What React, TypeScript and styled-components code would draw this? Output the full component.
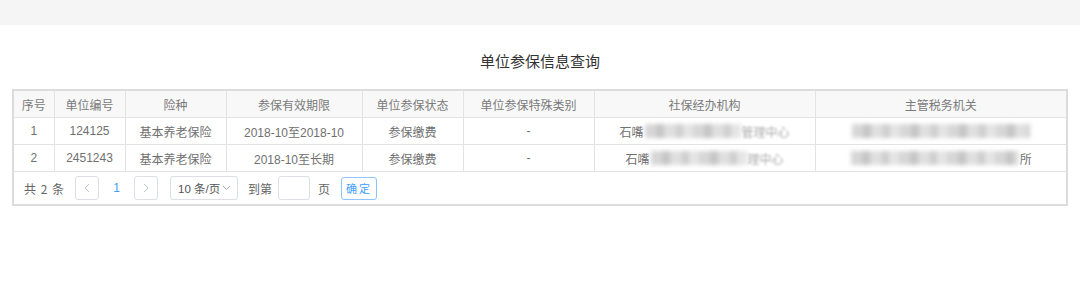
import React from 'react';
import styled, { createGlobalStyle } from 'styled-components';

interface Unit {
  no: number;
  code: string;
  kind: string;
  period: string;
  status: string;
  special: string;
  agencyHead: string;
  agencyTail: string;
  taxTail: string;
}

const GlobalStyle = createGlobalStyle`
  html, body {
    margin: 0;
    padding: 0;
    background: #fff;
  }
  body {
    font-family: "Liberation Sans", "Noto Sans CJK SC", sans-serif;
    color: #666;
  }
`;

const TopBar = styled.div`
  height: 25px;
  background: #f5f5f5;
`;

const Title = styled.h2`
  margin: 25px 0 0;
  height: 22px;
  line-height: 22px;
  text-align: center;
  font-size: 15px;
  font-weight: normal;
  color: #333;
  font-family: "Noto Sans CJK SC", sans-serif;
`;

const Panel = styled.div`
  margin: 17px 12px 0;
  border: 2px solid #dcdcdc;
  border-top-width: 1px;
`;

const Table = styled.table`
  width: 100%;
  border-collapse: collapse;
  table-layout: fixed;
  font-size: 12px;
`;

const Th = styled.th`
  height: 26px;
  padding: 0;
  font-weight: normal;
  color: #7a7a7a;
  background: #f8f8f8;
  border-right: 1px solid #e3e3e3;
  border-bottom: 1px solid #e3e3e3;
  border-top: 1px solid #dcdcdc;
  text-align: center;
  font-family: "Noto Sans CJK SC", sans-serif;
  &:last-child {
    border-right: none;
  }
`;

const Td = styled.td`
  height: 26px;
  padding: 0;
  color: #707070;
  border-right: 1px solid #e3e3e3;
  border-bottom: 1px solid #e3e3e3;
  text-align: center;
  white-space: nowrap;
  overflow: hidden;
  &:last-child {
    border-right: none;
  }
`;

const CellText = styled.span`
  display: inline-flex;
  align-items: center;
  vertical-align: middle;
`;

// masked part of an organisation name
const Mosaic = styled.span<{ $w: number }>`
  display: inline-block;
  width: ${p => p.$w}px;
  height: 14px;
  margin: 0 1px;
  background:
    repeating-linear-gradient(90deg,
      #d3d3d3 0 11px, #c0c0c0 11px 19px, #dcdcdc 19px 31px, #cacaca 31px 38px, #e2e2e2 38px 48px);
  filter: blur(2.2px);
  opacity: 0.9;
`;

const Faded = styled.span`
  color: #aaa;
  filter: blur(0.8px);
`;

const Pager = styled.div`
  display: flex;
  align-items: center;
  height: 32px;
  padding: 0 10px;
  font-size: 12px;
  color: #666;
  white-space: nowrap;
  font-family: "Noto Sans CJK SC", sans-serif;
`;

const Total = styled.span`
  margin-right: 11px;
  word-spacing: 2px;
`;

const PageBtn = styled.button`
  width: 24px;
  height: 24px;
  padding: 0;
  border: 1px solid #dcdfe6;
  border-radius: 3px;
  background: #fff;
  color: #c0c4cc;
  display: flex;
  align-items: center;
  justify-content: center;
`;

const PageNum = styled.span`
  width: 35px;
  text-align: center;
  color: #409eff;
  font-family: "Liberation Sans", sans-serif;
`;

const SizeSelect = styled.div`
  margin-left: 12px;
  width: 68px;
  height: 24px;
  box-sizing: border-box;
  border: 1px solid #dcdfe6;
  border-radius: 3px;
  display: flex;
  align-items: center;
  justify-content: space-between;
  padding: 0 6px 0 7px;
  color: #555;
  font-size: 11.5px;
  font-family: "Liberation Sans", "Noto Sans CJK SC", sans-serif;
`;

const Label = styled.span<{ $ml: number }>`
  margin-left: ${p => p.$ml}px;
  color: #666;
`;

const JumpInput = styled.input`
  margin-left: 6px;
  width: 32px;
  height: 24px;
  box-sizing: border-box;
  border: 1px solid #dcdfe6;
  border-radius: 3px;
`;

const OkBtn = styled.button`
  margin-left: 11px;
  width: 36px;
  height: 23px;
  padding: 0;
  border: 1px solid #8cc5ff;
  border-radius: 3px;
  background: #fff;
  color: #409eff;
  font-size: 11px;
  letter-spacing: 2px;
  font-family: "Noto Sans CJK SC", sans-serif;
`;

const Chevron = ({ dir }: { dir: 'left' | 'right' | 'down' }) => {
  const d =
    dir === 'left' ? 'M6 1 L2 5 L6 9' : dir === 'right' ? 'M2 1 L6 5 L2 9' : 'M1 3 L4.5 6.5 L8 3';
  const w = dir === 'down' ? 9 : 8;
  return (
    <svg width={w} height={10} viewBox={`0 0 ${w} 10`} fill="none">
      <path d={d} stroke={dir === 'down' ? '#aaa' : '#c0c4cc'} strokeWidth="1" />
    </svg>
  );
};

const columns = [
  { title: '序号', width: 40 },
  { title: '单位编号', width: 71 },
  { title: '险种', width: 101 },
  { title: '参保有效期限', width: 136 },
  { title: '单位参保状态', width: 101 },
  { title: '单位参保特殊类别', width: 131 },
  { title: '社保经办机构', width: 221 },
  { title: '主管税务机关', width: 251 },
];

const rows: Unit[] = [
  {
    no: 1,
    code: '124125',
    kind: '基本养老保险',
    period: '2018-10至2018-10',
    status: '参保缴费',
    special: '-',
    agencyHead: '石嘴',
    agencyTail: '管理中心',
    taxTail: '',
  },
  {
    no: 2,
    code: '2451243',
    kind: '基本养老保险',
    period: '2018-10至长期',
    status: '参保缴费',
    special: '-',
    agencyHead: '石嘴',
    agencyTail: '理中心',
    taxTail: '所',
  },
];

const App = () => {
  return (
    <>
      <GlobalStyle />
      <TopBar />
      <Title>单位参保信息查询</Title>
      <Panel>
        <Table>
          <colgroup>
            {columns.map(c => (
              <col key={c.title} style={{ width: c.width }} />
            ))}
          </colgroup>
          <thead>
            <tr>
              {columns.map(c => (
                <Th key={c.title}>{c.title}</Th>
              ))}
            </tr>
          </thead>
          <tbody>
            {rows.map(r => (
              <tr key={r.no}>
                <Td>{r.no}</Td>
                <Td>{r.code}</Td>
                <Td>{r.kind}</Td>
                <Td>{r.period}</Td>
                <Td>{r.status}</Td>
                <Td>{r.special}</Td>
                <Td>
                  <CellText>
                    {r.agencyHead}
                    <Mosaic $w={96} />
                    <Faded>{r.agencyTail}</Faded>
                  </CellText>
                </Td>
                <Td>
                  <CellText>
                    <Mosaic $w={r.taxTail ? 168 : 178} />
                    {r.taxTail}
                  </CellText>
                </Td>
              </tr>
            ))}
          </tbody>
        </Table>
        <Pager>
          <Total>共 2 条</Total>
          <PageBtn>
            <Chevron dir="left" />
          </PageBtn>
          <PageNum>1</PageNum>
          <PageBtn>
            <Chevron dir="right" />
          </PageBtn>
          <SizeSelect>
            <span>10 条/页</span>
            <Chevron dir="down" />
          </SizeSelect>
          <Label $ml={10}>到第</Label>
          <JumpInput />
          <Label $ml={8}>页</Label>
          <OkBtn>确定</OkBtn>
        </Pager>
      </Panel>
    </>
  );
};

export default App;
